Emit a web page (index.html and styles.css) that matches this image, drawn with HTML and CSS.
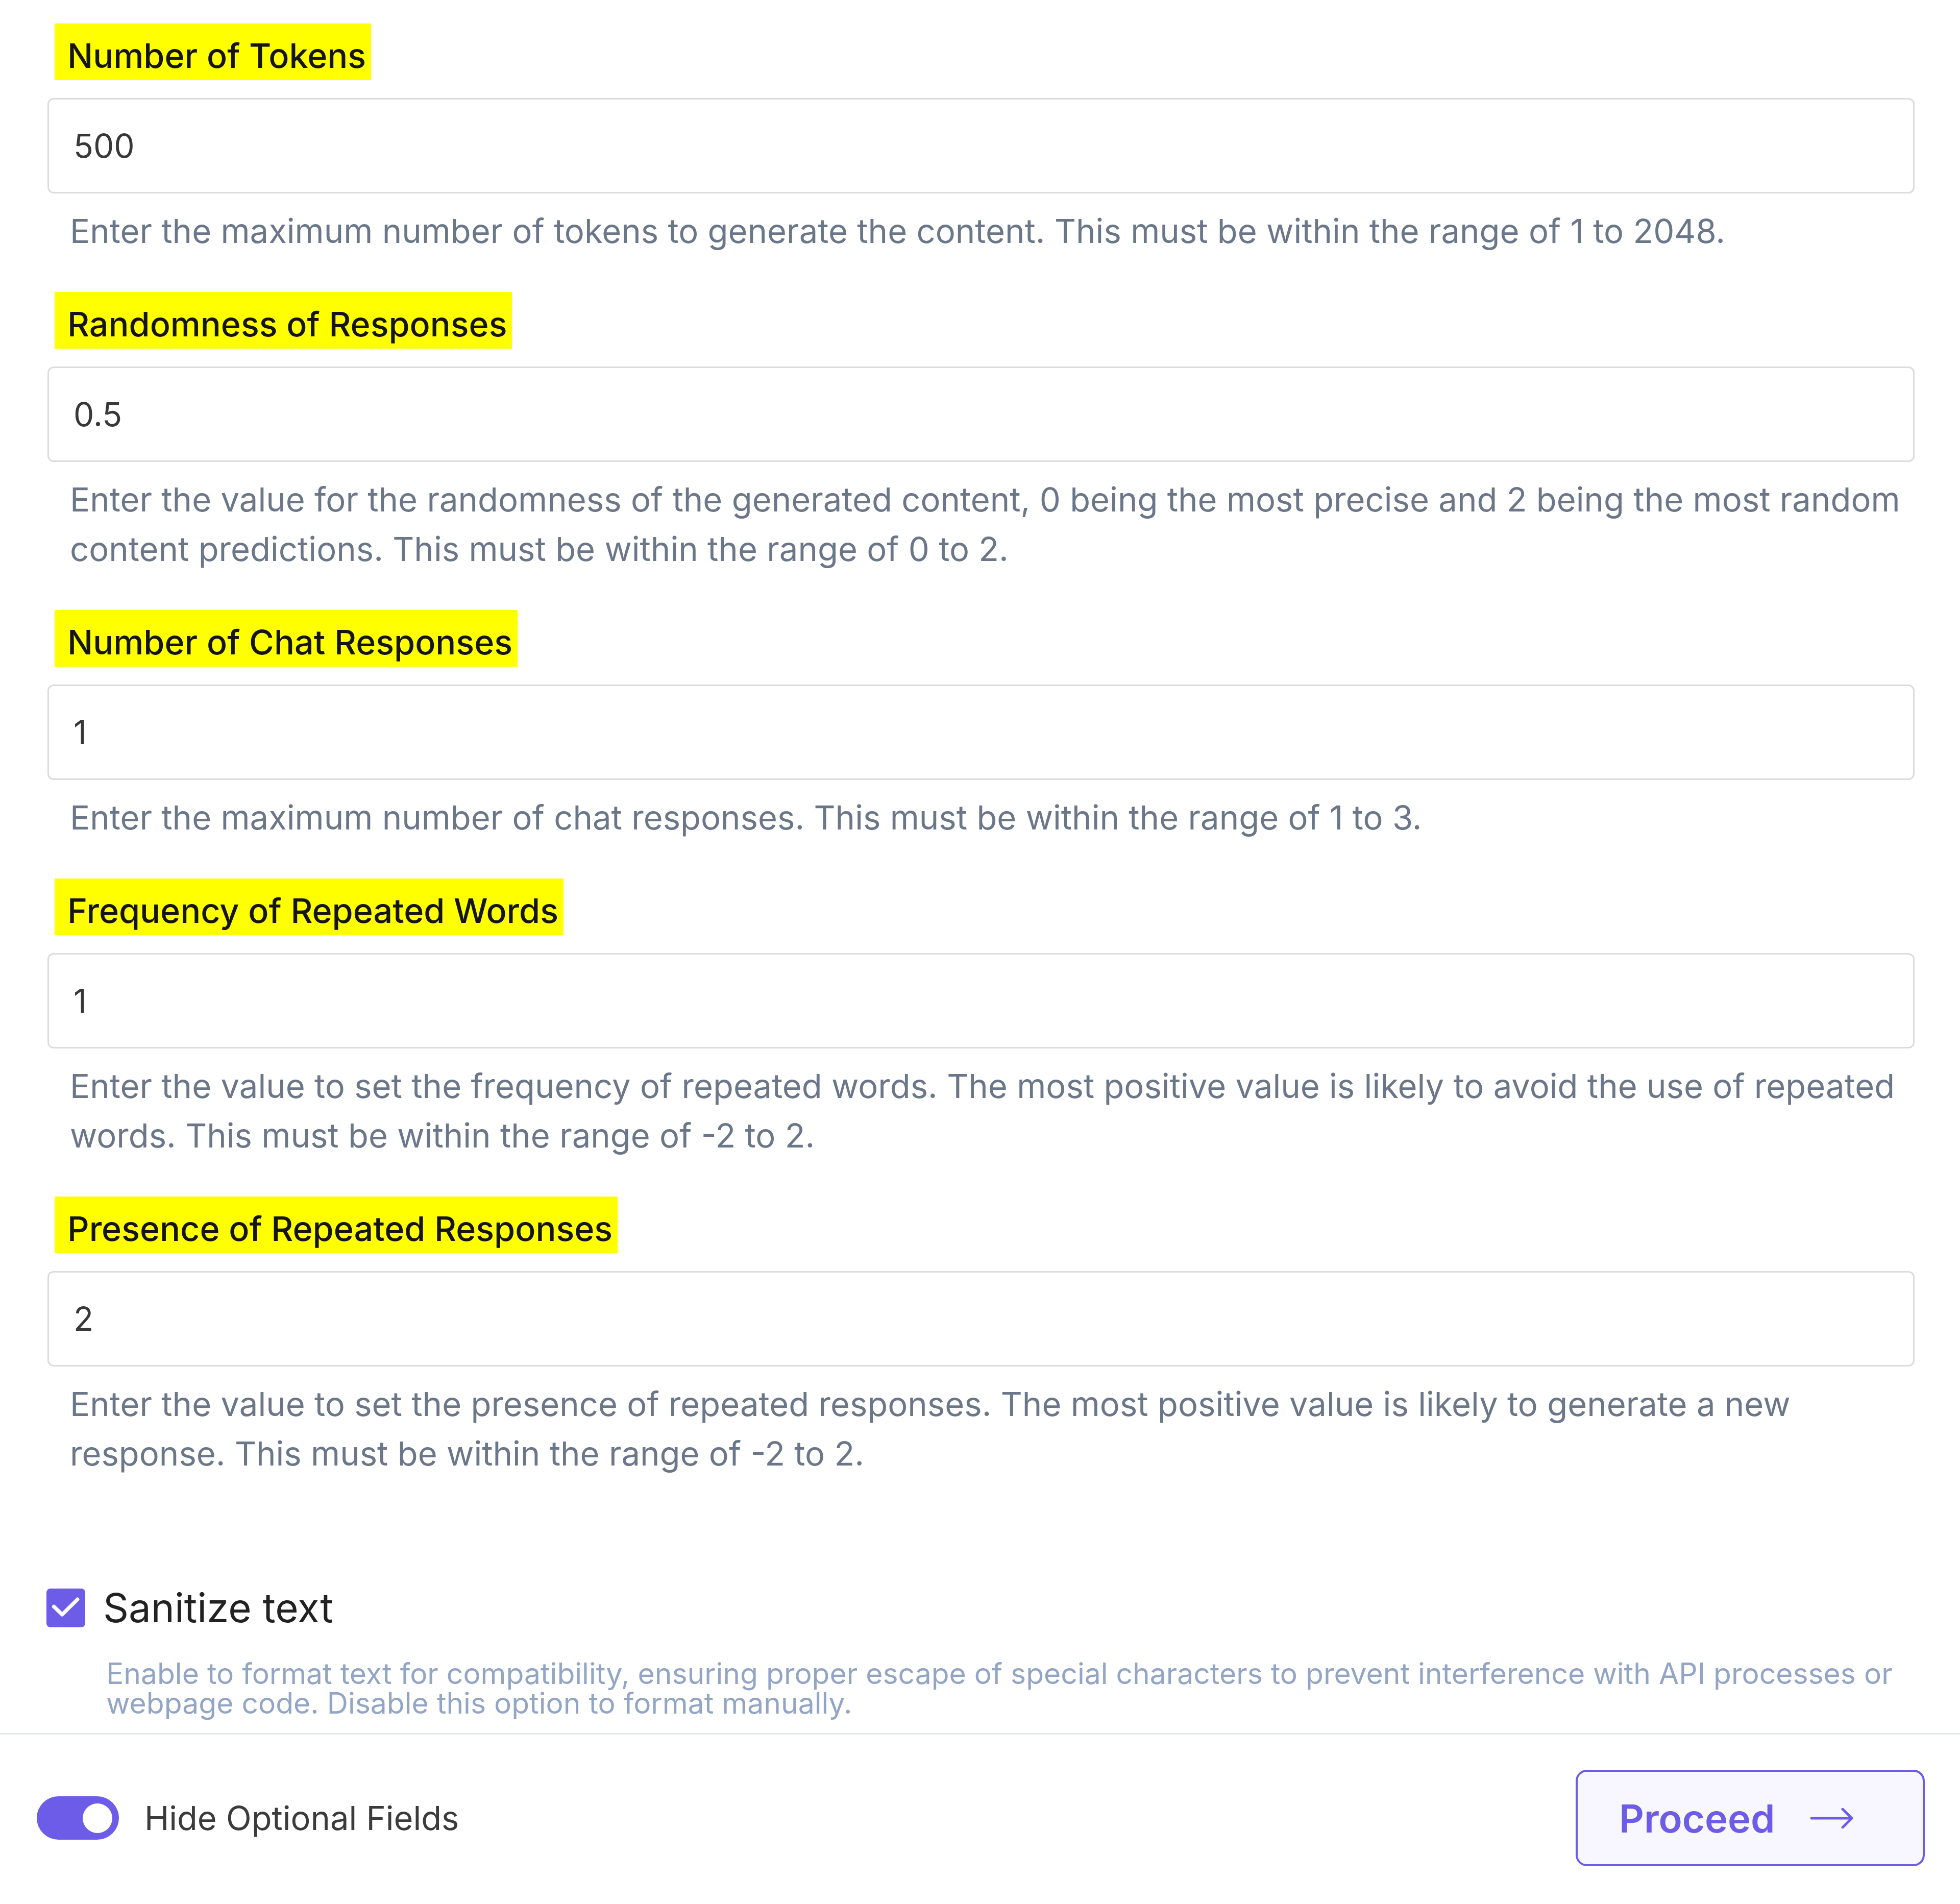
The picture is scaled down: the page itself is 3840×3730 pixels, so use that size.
FILE: index.html
```html
<!DOCTYPE html>
<html lang="en">
<head>
    <meta charset="UTF-8">
    <meta name="viewport" content="width=device-width, initial-scale=1.0">
    <link rel="stylesheet" href="styles.css">
    <title>Advanced Settings</title>
</head>
<body>
    <div class="form">
        <div class="field">
            <label class="field-label" for="tokens">Number of Tokens</label>
            <input class="field-input" type="text" id="tokens" value="500">
            <p class="field-help">Enter the maximum number of tokens to generate the content. This must be within the range of 1 to 2048.</p>
        </div>

        <div class="field">
            <label class="field-label" for="randomness">Randomness of Responses</label>
            <input class="field-input" type="text" id="randomness" value="0.5">
            <p class="field-help">Enter the value for the randomness of the generated content, 0 being the most precise and 2 being the most random content predictions. This must be within the range of 0 to 2.</p>
        </div>

        <div class="field">
            <label class="field-label" for="responses">Number of Chat Responses</label>
            <input class="field-input" type="text" id="responses" value="1">
            <p class="field-help">Enter the maximum number of chat responses. This must be within the range of 1 to 3.</p>
        </div>

        <div class="field">
            <label class="field-label" for="frequency">Frequency of Repeated Words</label>
            <input class="field-input" type="text" id="frequency" value="1">
            <p class="field-help">Enter the value to set the frequency of repeated words. The most positive value is likely to avoid the use of repeated words. This must be within the range of -2 to 2.</p>
        </div>

        <div class="field">
            <label class="field-label" for="presence">Presence of Repeated Responses</label>
            <input class="field-input" type="text" id="presence" value="2">
            <p class="field-help">Enter the value to set the presence of repeated responses. The most positive value is likely to generate a new response. This must be within the range of -2 to 2.</p>
        </div>

        <div class="sanitize">
            <label class="check-row">
                <span class="check-box">
                    <svg viewBox="0 0 24 24" width="76" height="76">
                        <path d="M4.6 11.2 L9.7 16.1 L19.2 6.7" fill="none" stroke="#fff" stroke-width="2.3" stroke-linecap="round" stroke-linejoin="round"/>
                    </svg>
                </span>
                <span class="check-text">Sanitize text</span>
            </label>
            <p class="check-help">Enable to format text for compatibility, ensuring proper escape of special characters to prevent interference with API processes or webpage code. Disable this option to format manually.</p>
        </div>
    </div>

    <div class="footer">
        <div class="toggle-row">
            <span class="toggle"><span class="toggle-knob"></span></span>
            <span class="toggle-text">Hide Optional Fields</span>
        </div>
        <button type="button" class="proceed-button">
            <span>Proceed</span>
            <svg viewBox="0 0 84 40" width="84" height="40">
                <path d="M2 20 H81 M63 2 L81 20 L63 38" fill="none" stroke="#6c5ce7" stroke-width="5" stroke-linecap="round" stroke-linejoin="round"/>
            </svg>
        </button>
    </div>
</body>
</html>
```

FILE: styles.css
```css
body {
    margin: 0;
    padding: 0;
    font-family: Inter, "Noto Sans", sans-serif;
    background-color: #fff;
    color: #333;
}

.form {
    padding: 46px 89px 29px 93px;
}

.field {
    display: flex;
    flex-direction: column;
    align-items: flex-start;
}

.field + .field {
    margin-top: 71px;
}

.field-label {
    background-color: #ffff00;
    color: #151515;
    font-size: 66.5px;
    font-weight: 500;
    line-height: 80px;
    padding: 23px 10px 8px 25px;
    margin-left: 14px;
    margin-bottom: 35px;
}

.field-input {
    align-self: stretch;
    height: 187px;
    box-sizing: border-box;
    border: 3px solid #dcdcdc;
    border-radius: 12px;
    padding: 0 48px;
    font-family: Inter, "Noto Sans", sans-serif;
    font-size: 64px;
    color: #383838;
    background-color: #fff;
    outline: none;
}

.field-help {
    margin: 25px 0 0;
    padding: 0 0 0 44px;
    font-size: 65.2px;
    line-height: 97px;
    color: #6b7789;
}

.sanitize {
    margin-top: 207px;
}

.check-row {
    display: flex;
    align-items: center;
    gap: 35px;
    margin-left: -2px;
}

.check-box {
    width: 76px;
    height: 76px;
    border-radius: 8px;
    background-color: #6c5ce7;
    display: flex;
}

.check-text {
    font-size: 78px;
    line-height: 94px;
    color: #222;
}

.check-help {
    margin: 53px 0 0;
    padding: 0 30px 0 115px;
    font-size: 57px;
    line-height: 58px;
    color: #93a5c4;
}

.footer {
    height: 330px;
    box-sizing: border-box;
    border-top: 3px solid #e3e8ef;
    display: flex;
    align-items: center;
    justify-content: space-between;
    padding: 0 69px 0 72px;
}

.toggle-row {
    display: flex;
    align-items: center;
}

.toggle {
    width: 161px;
    height: 85px;
    border-radius: 43px;
    background-color: #6c5ce7;
    display: flex;
    align-items: center;
    justify-content: flex-end;
}

.toggle-knob {
    width: 58px;
    height: 58px;
    border-radius: 50%;
    background-color: #fff;
    margin-right: 13px;
}

.toggle-text {
    margin-left: 50px;
    font-size: 65px;
    color: #3b3b3b;
}

.proceed-button {
    width: 684px;
    height: 189px;
    box-sizing: border-box;
    border: 4px solid #6c5ce7;
    border-radius: 22px;
    background-color: #f8f7ff;
    color: #6c5ce7;
    font-family: Inter, "Noto Sans", sans-serif;
    font-size: 76px;
    font-weight: 600;
    padding: 0 0 0 81px;
    display: flex;
    align-items: center;
    gap: 70px;
    cursor: pointer;
}
```
